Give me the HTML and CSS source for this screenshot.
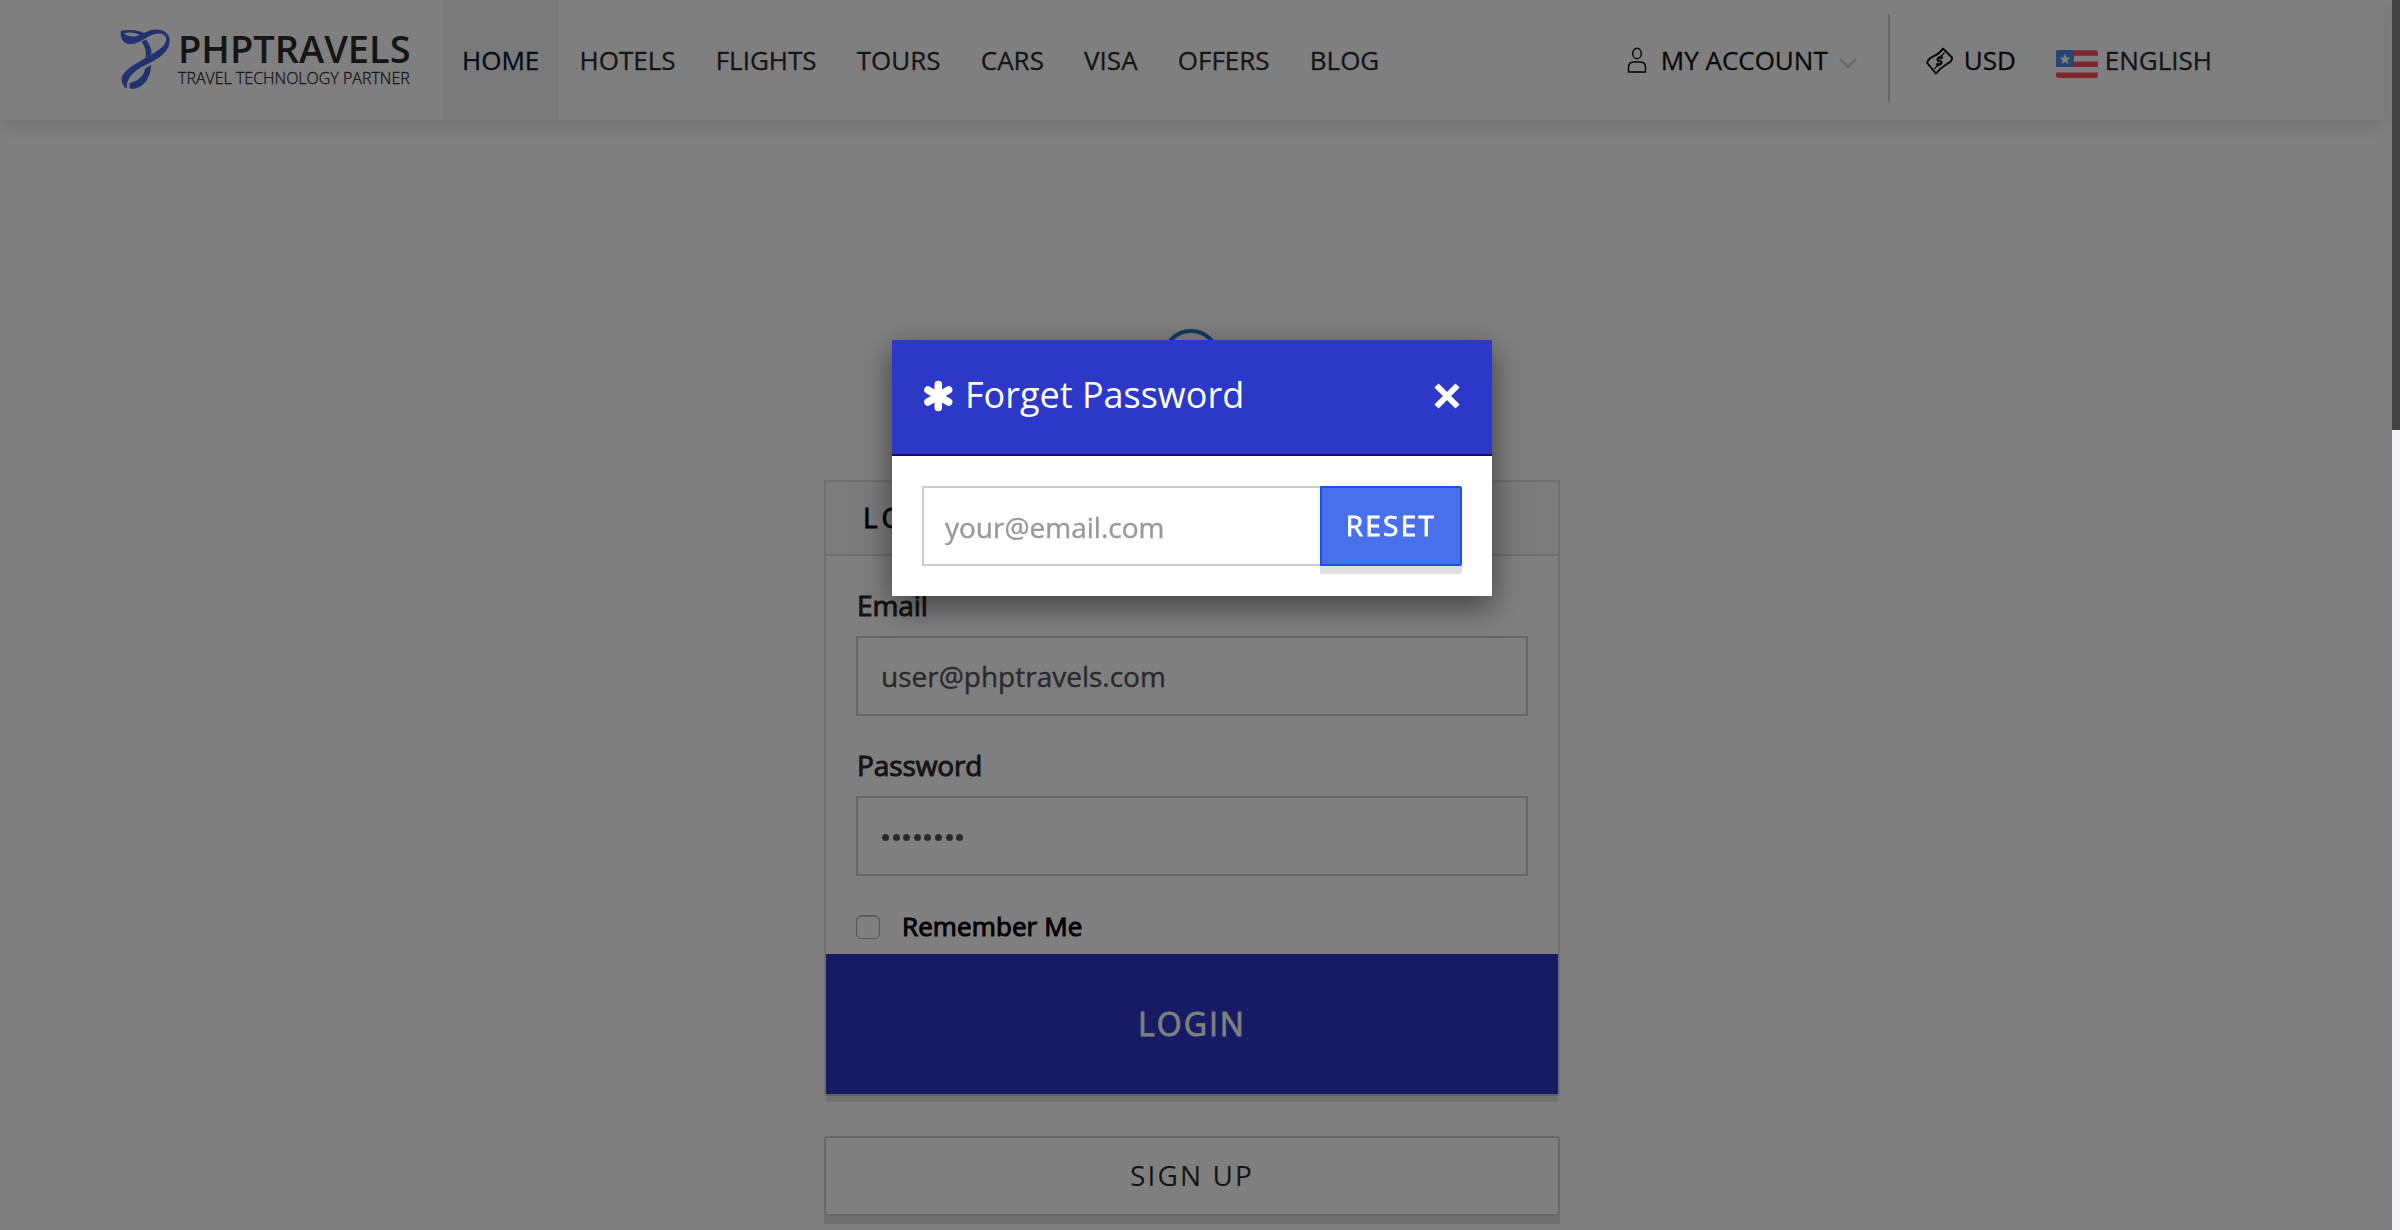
FILE: index.html
```html
<!DOCTYPE html>
<html lang="en">
<head>
<meta charset="utf-8">
<title>Login</title>
<link rel="stylesheet" href="styles.css">
</head>
<body>
<div class="page">
  <header class="header">
    <a class="logo">
      <svg class="logo-mark" viewBox="0 0 50 62" width="50" height="62" fill="#4066e0">
        <path fill-rule="evenodd" d="M1 3C0 9 2 15 9 16C20 17 28 6 38 5.500C44 5.500 47 9 46 13C44 21 30 27 17 35C5 42 0 48 2 54C3 58 5 60 7 60C6 52 11 46 20 40C33 33 49 27 49.700 13C50 5 43 1 35 1.500C30 2 27 4 24 5C19 2 8 1 1 3ZM4 5.500C9 3.500 15 4.500 20 7C14 9.500 8 9 4 5.500Z"/>
        <path d="M21.500 13.500L26 11.500C30 17 32 22 31.500 26.500L25.500 30C26.500 24 25 18 21.500 13.500Z"/>
        <path d="M25 40.500L31 37C31 48 25 60 12 61C9 61 9 58 10 55C18 53 24 48 25 40.500Z"/>
      </svg>
      <span class="logo-text"><span class="logo-name">PHPTRAVELS</span><span class="logo-tag">TRAVEL TECHNOLOGY PARTNER</span></span>
    </a>
    <nav class="nav">
      <a class="nav-item active">HOME</a><a class="nav-item">HOTELS</a><a class="nav-item">FLIGHTS</a><a class="nav-item">TOURS</a><a class="nav-item">CARS</a><a class="nav-item">VISA</a><a class="nav-item">OFFERS</a><a class="nav-item">BLOG</a>
    </nav>
    <div class="tools">
      <a class="tool account">
        <svg class="user-icon" viewBox="0 0 20 28" width="20" height="28"><g fill="none" stroke="#000" stroke-width="1.4"><ellipse cx="10" cy="7.500" rx="4.300" ry="5.200"/><path d="M1.500 26V21.500Q1.500 16 7 16H13Q18.500 16 18.500 21.500V26Z"/></g></svg>
        <span>MY ACCOUNT</span>
        <svg class="chevron" viewBox="0 0 18 12" width="18" height="12"><path d="M1 2L9 10L17 2" fill="none" stroke="#d2d2d2" stroke-width="2.600"/></svg>
      </a>
      <a class="tool currency">
        <svg class="money-icon" viewBox="0 0 28 28" width="28" height="28"><g fill="none" stroke="#000" stroke-width="1.900" stroke-linejoin="round"><path d="M17 1.500L26 10.500C26.500 17 19 15 10 26.500L1.200 16C2 8.500 11 11 17 1.500Z"/><path d="M16.500 11.500Q13.500 9.500 12 11.500T13.500 14T15 16.500T10.500 16.500M16.500 9.500L15.300 11.500M11.800 16.500L10.500 18.500" stroke-width="2.200"/><path d="M18.500 5.500Q17 8.500 14.500 9M8.500 22Q10 19.500 12.500 18.500" stroke-width="1.300"/></g></svg>
        <span>USD</span>
      </a>
      <a class="tool language">
        <svg class="flag" viewBox="0 0 42 28" width="42" height="28"><clipPath id="f"><rect width="42" height="28" rx="2.500"/></clipPath><g clip-path="url(#f)"><rect width="42" height="28" fill="#fff"/><path d="M0 3H42M0 14.300H42M0 25.400H42" stroke="#ff5064" stroke-width="5.600"/><rect width="18" height="17" fill="#4c8fe8"/><path d="M9 3.500L10.500 7.500L14.500 7.700L11.300 10.200L12.400 14L9 11.800L5.600 14L6.700 10.200L3.500 7.700L7.500 7.500Z" fill="#fff"/></g></svg>
        <span>ENGLISH</span>
      </a>
    </div>
  </header>
  <main class="content">
    <div class="avatar"></div>
    <section class="panel">
      <h1 class="panel-title">LOGIN</h1>
      <form class="form">
        <label class="label">Email</label>
        <div class="field">user@phptravels.com</div>
        <label class="label">Password</label>
        <div class="field dots"><i></i><i></i><i></i><i></i><i></i><i></i><i></i><i></i></div>
        <div class="remember"><span class="box"></span><span class="remember-text">Remember Me</span></div>
      </form>
      <div class="login">LOGIN</div>
    </section>
    <div class="signup">SIGN UP</div>
  </main>
</div>
<div class="overlay"></div>
<div class="modal">
  <div class="modal-head">
    <svg class="asterisk" viewBox="0 0 30 32" width="30" height="32"><path d="M15.300 4.500V27.500M5 10L25.600 22M5 22L25.600 10" stroke="#fff" stroke-width="7.600" stroke-linecap="round"/></svg>
    <span class="modal-title">Forget Password</span>
    <svg class="close" viewBox="0 0 26 26" width="26" height="26"><path d="M2.500 2.500L23.500 23.500M23.500 2.500L2.500 23.500" stroke="#fff" stroke-width="6"/></svg>
  </div>
  <div class="modal-body"><div class="email">your@email.com</div><div class="reset">RESET</div></div>
</div>
<div class="scrollbar"><div class="thumb"></div></div>
</body>
</html>
```
FILE: styles.css
```css
* { box-sizing: border-box; }
body { margin: 0; font-family: "Open Sans", sans-serif; font-size: 26px; background: #fff; height: 1230px; overflow: hidden; color: #2b2b2b; }
.page { height: 1230px; overflow: hidden; }
.header { width: 2384px; height: 120px; display: flex; background: #fff; box-shadow: 0 6px 18px rgba(0,0,0,.12); }
.logo { width: 442px; padding: 28px 0 0 120px; display: flex; gap: 8px; }
.logo-text { display: flex; flex-direction: column; color: #2b2b2b; white-space: nowrap; }
.logo-name { font: 600 38px/40px "Open Sans", sans-serif; }
.logo-tag { font: 300 16px/20px "Open Sans", sans-serif; -webkit-text-stroke: .3px #2b2b2b; }
.nav { display: flex; line-height: 120px; -webkit-text-stroke: .3px; }
.nav-item { padding: 0 20.100px; }
.active { background: #f5f5f5; color: #001838; }
.tools { display: flex; flex: 1; justify-content: flex-end; padding-right: 172px; color: #111; -webkit-text-stroke: .3px; }
.tool { display: flex; align-items: center; white-space: nowrap; }
.account { gap: 15px; padding-right: 31px; }
.user-icon { margin-right: -1px; }
.chevron { margin: 6px 0 0 -4px; }
.currency { height: 88px; margin-top: 14px; padding: 0 0 0 36px; border-left: 2px solid #ccc; gap: 10px; }
.currency span { margin-top: 4px; }
.money-icon { margin-top: 5px; }
.language { gap: 7px; padding-left: 40px; color: #2b2b2b; }
.flag { margin-top: 8px; }
.content { width: 736px; margin-left: 824px; display: flex; flex-direction: column; padding-top: 209px; }
.avatar { width: 58px; height: 58px; align-self: center; margin-right: 2px; border: 4px solid #2a77bd; border-radius: 50%; margin-bottom: 93px; }
.panel { border: 2px solid #ddd; height: 616px; display: flex; flex-direction: column; }
.panel-title { margin: 0; height: 74px; padding-left: 37px; border-bottom: 2px solid #ddd; background: #f8f8f8; font: 400 28px/71px "Open Sans", sans-serif; -webkit-text-stroke: .8px; letter-spacing: 4px; color: #000; }
.form { height: 398px; padding: 30px 30px 0; flex: none; }
.label { display: block; height: 40px; line-height: 39px; margin-bottom: 10px; padding-left: 1px; font-size: 28px; letter-spacing: -.1px; -webkit-text-stroke: 1px; }
.field { height: 80px; border: 2px solid #ccc; padding: 0 23px; font-size: 28px; line-height: 77px; color: #555; -webkit-text-stroke: .4px; margin-bottom: 30px; }
.dots { display: flex; gap: 3.600px; align-items: center; padding-left: 24px; padding-top: 2px; }
.dots i { width: 7px; height: 7px; border-radius: 50%; background: #555; }
.remember { display: flex; align-items: center; gap: 22px; height: 40px; margin-top: 31px; color: #000; font-size: 26px; -webkit-text-stroke: 1px; }
.remember-text { margin-top: -2px; letter-spacing: .1px; }
.box { width: 24px; height: 24px; border: 1px solid #aaa; border-radius: 5px; box-shadow: inset 0 1px 1px #bbb; }
.login { height: 140px; background: #2b38c8; color: #fff; box-shadow: 0 8px 0 rgba(0,0,0,.12); text-align: center; font: 400 32px/140px "Open Sans", sans-serif; -webkit-text-stroke: .8px; letter-spacing: 2px; }
.signup { height: 80px; margin-top: 40px; border: 2px solid #ccc; border-radius: 2px; box-shadow: 0 8px 0 rgba(0,0,0,.12); text-align: center; font-size: 28px; line-height: 75px; letter-spacing: 2.100px; }
.overlay { position: fixed; inset: 0; background: rgba(0,0,0,.5); }
.modal { position: absolute; left: 892px; top: 340px; width: 600px; height: 256px; background: #fff; box-shadow: 0 10px 30px rgba(0,0,0,.5); }
.modal-head { height: 116px; background: #2b38c8; border-bottom: 2px solid #1c0a5c; color: #fff; display: flex; align-items: center; padding: 0 32px 3px 31px; }
.modal-title { flex: 1; margin: -2px 0 0 12px; font-size: 36px; line-height: 48px; }
.modal-body { display: flex; padding: 30px; }
.email { flex: 1; height: 80px; border: 2px solid #ccc; border-right: 0; padding-left: 21px; line-height: 78px; color: #999; font-size: 28px; -webkit-text-stroke: .4px; }
.reset { width: 142px; height: 80px; border: 2px solid #1b4fee; border-radius: 0 2px 2px 0; background: #4870ec; color: #fff; text-align: center; font-size: 28px; line-height: 75px; letter-spacing: 2.300px; -webkit-text-stroke: .8px; box-shadow: 0 8px 0 rgba(0,0,0,.12); }
.scrollbar { position: absolute; right: 0; top: 0; width: 8px; height: 1230px; background: #f3f3f9; }
.thumb { height: 430px; background: #424242; }
```
